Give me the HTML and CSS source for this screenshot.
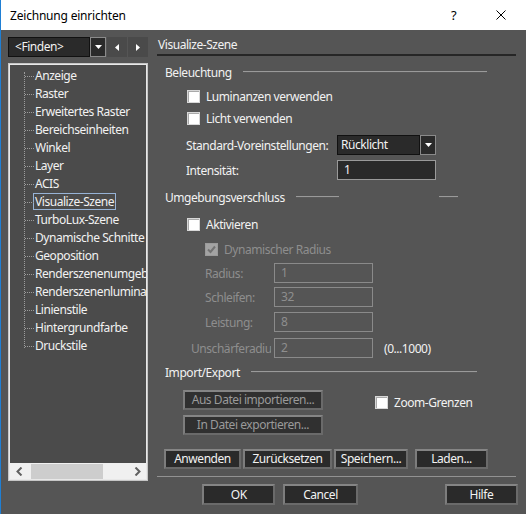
FILE: index.html
```html
<!DOCTYPE html>
<html lang="de">
<head>
    <meta charset="UTF-8">
    <title>Zeichnung einrichten</title>
    <link rel="stylesheet" href="styles.css">
</head>
<body>
<div class="win">
    <div class="titlebar">
        <span class="title">Zeichnung einrichten</span>
        <span class="help">?</span>
        <svg class="close" width="10" height="10" viewBox="0 0 10 10"><path d="M0.5 0.5L9.5 9.5M9.5 0.5L0.5 9.5" stroke="#000" stroke-width="1"/></svg>
    </div>
    <div class="main">
        <div class="left">
            <div class="navbar">
                <div class="find">&lt;Finden&gt;</div>
                <div class="dd"><svg width="7" height="4" viewBox="0 0 7 4"><path d="M0 0H7L3.5 4Z" fill="#fff"/></svg></div>
                <div class="navbtn"><svg width="4" height="7" viewBox="0 0 4 7"><path d="M4 0V7L0 3.5Z" fill="#fff"/></svg></div>
                <div class="navbtn"><svg width="4" height="7" viewBox="0 0 4 7"><path d="M0 0V7L4 3.5Z" fill="#fff"/></svg></div>
            </div>
            <div class="tree">
                <ul class="items">
                    <li><span>Anzeige</span></li>
                    <li><span>Raster</span></li>
                    <li><span>Erweitertes Raster</span></li>
                    <li><span>Bereichseinheiten</span></li>
                    <li><span>Winkel</span></li>
                    <li><span>Layer</span></li>
                    <li><span>ACIS</span></li>
                    <li class="sel"><span>Visualize-Szene</span></li>
                    <li><span>TurboLux-Szene</span></li>
                    <li><span>Dynamische Schnitte</span></li>
                    <li><span>Geoposition</span></li>
                    <li><span>Renderszenenumgebung</span></li>
                    <li><span>Renderszenenluminanz</span></li>
                    <li><span>Linienstile</span></li>
                    <li><span>Hintergrundfarbe</span></li>
                    <li><span>Druckstile</span></li>
                </ul>
                <div class="hscroll">
                    <svg width="7" height="9" viewBox="0 0 7 9"><path d="M5.5 0.5L1.5 4.5L5.5 8.5" stroke="#606060" stroke-width="2" fill="none"/></svg>
                    <div class="track"><div class="thumb"></div></div>
                    <svg width="7" height="9" viewBox="0 0 7 9"><path d="M1.5 0.5L5.5 4.5L1.5 8.5" stroke="#606060" stroke-width="2" fill="none"/></svg>
                </div>
            </div>
        </div>

        <div class="right">
            <div class="pagehead">Visualize-Szene</div>

            <div class="grouphead g1">
                <span>Beleuchtung</span><i class="gline" style="width: 244px"></i>
            </div>
            <div class="row check r-lum"><i class="box"></i>Luminanzen verwenden</div>
            <div class="row check r-licht"><i class="box"></i>Licht verwenden</div>
            <div class="row field r-std">
                <span class="lbl lbl-a">Standard-Voreinstellungen:</span>
                <div class="combo"><span>Rücklicht</span></div>
                <div class="dd"><svg width="7" height="4" viewBox="0 0 7 4"><path d="M0 0H7L3.5 4Z" fill="#fff"/></svg></div>
            </div>
            <div class="row field r-int">
                <span class="lbl lbl-a">Intensität:</span>
                <div class="input wide">1</div>
            </div>

            <div class="grouphead g2">
                <span>Umgebungsverschluss</span><i class="gline" style="width: 43px"></i><i class="gline" style="width: 19px; margin-left: 100px"></i>
            </div>
            <div class="row check r-akt"><i class="box"></i>Aktivieren</div>
            <div class="row check off r-dyn"><i class="box checked"><svg width="11" height="11" viewBox="0 0 11 11"><path d="M2 5.5L4.5 8L9 2.5" stroke="#727272" stroke-width="2" fill="none"/></svg></i>Dynamischer Radius</div>
            <div class="row field off r-rad">
                <span class="lbl lbl-b">Radius:</span><div class="input">1</div>
            </div>
            <div class="row field off r-sch">
                <span class="lbl lbl-b">Schleifen:</span><div class="input">32</div>
            </div>
            <div class="row field off r-lei">
                <span class="lbl lbl-b">Leistung:</span><div class="input">8</div>
            </div>
            <div class="row field off r-uns">
                <span class="lbl lbl-c">Unschärferadius:</span><div class="input">2</div>
                <span class="range">(0...1000)</span>
            </div>

            <div class="grouphead g3">
                <span>Import/Export</span><i class="gline" style="width: 226px"></i>
            </div>
            <div class="io">
                <div class="iobtns">
                    <div class="btn dis io1">Aus Datei importieren...</div>
                    <div class="btn dis io2">In Datei exportieren...</div>
                </div>
                <div class="row check zoom"><i class="box"></i>Zoom-Grenzen</div>
            </div>

            <div class="actions">
                <div class="btn" style="width: 77px">Anwenden</div>
                <div class="btn" style="width: 89px">Zurücksetzen</div>
                <div class="btn" style="width: 74px">Speichern...</div>
                <div class="btn gap7" style="width: 73px">Laden...</div>
            </div>
            <div class="sep"></div>
            <div class="dialogbtns">
                <div class="btn big" style="width: 74px">OK</div>
                <div class="btn big" style="width: 75px">Cancel</div>
                <div class="btn big push" style="width: 74px">Hilfe</div>
            </div>
        </div>
    </div>
</div>
</body>
</html>
```

FILE: styles.css
```css
* {
    margin: 0; padding: 0; box-sizing: border-box;
}
body {
    width: 526px; height: 514px; overflow: hidden;
    font-family: "Noto Sans", "Open Sans", sans-serif; font-size: 12px; letter-spacing: -0.45px; color: #f2f2f2;
}
.win {
    width: 526px; height: 514px; background: #555555; border-left: 1px solid #1f7fd4;
}

/* title bar */
.titlebar {
    height: 30px; background: #fff; display: flex; align-items: center; color: #000;
}
.title { margin-left: 9px; flex: 1; letter-spacing: -0.2px; }
.help { width: 8px; margin-right: 37px; font-size: 13px; }
.close { margin-right: 20px; }

.main { display: flex; padding-top: 7px; }

/* left side */
.left { width: 140px; margin-left: 7px; }
.navbar { display: flex; height: 20px; }
.find {
    width: 82px; height: 20px; background: #2a2a2a; border: 1px solid #111; line-height: 17px; padding-left: 6px;
}
.dd {
    width: 16px; height: 20px; background: #2a2a2a; border: 1px solid #8a8a8a;
    display: flex; align-items: center; justify-content: center;
}
.navbtn {
    width: 20px; height: 20px; margin-left: 1px; background: #4a4a4a;
    display: flex; align-items: center; justify-content: center;
}
.tree {
    margin-top: 6px; height: 418px; background: #4b4b4b;
    border: 1px solid #c6c6c6; box-shadow: inset 0 0 0 1px #e8e8e8;
    display: flex; flex-direction: column; padding: 1px;
}
.items {
    list-style: none; flex: 1; position: relative; padding-top: 2px; overflow: hidden;
}
.items:before {
    content: ""; position: absolute; left: 14px; top: 7px; height: 276px; border-left: 1px dotted #9c9c9c;
}
.items li {
    height: 18px; line-height: 18px; white-space: nowrap; padding-left: 23px; position: relative;
}
.items li:before {
    content: ""; position: absolute; left: 15px; top: 9px; width: 9px; border-top: 1px dotted #9c9c9c;
}
.items li span { padding: 0 1px; border: 1px solid transparent; line-height: 15px; display: inline-block; }
.items li.sel span { border-color: #97b3d6; }

.hscroll {
    height: 16px; background: #f0f0f0; display: flex; align-items: center; padding: 0 5px 0 6px;
}
.track { flex: 1; height: 15px; padding: 0 31px 0 8px; }
.thumb { height: 15px; background: #cdcdcd; }

/* right side */
.right { width: 361px; margin-left: 9px; }
.pagehead {
    width: 359px; height: 19px; line-height: 16px; padding-left: 1px; border-bottom: 2px solid #262626;
}
.grouphead { display: flex; align-items: center; height: 16px; padding-left: 8px; }
.grouphead span { margin-right: 11px; }
.gline { display: block; height: 2px; border-top: 1px solid #9a9a9a; border-bottom: 1px solid #5a5a5a; }
.g1 { margin-top: 8px; }
.g2 { margin-top: 9px; }
.g3 { margin-top: 6px; }

.row { display: flex; align-items: center; }
.check { height: 16px; padding-left: 30px; }
.box {
    display: flex; align-items: center; justify-content: center;
    width: 13px; height: 13px; background: #fff; border: 1px solid #d8d8d8;
    box-shadow: inset 1px 1px 0 #a9a9a9; margin-right: 6px;
}
.box.checked { background: #a3a3a3; border-color: #9a9a9a; box-shadow: none; }
.off { color: #8e8e8e; }

.r-lum { margin-top: 8px; }
.r-licht { margin-top: 6px; }
.field { height: 20px; }
.r-std { margin-top: 9px; }
.r-int { margin-top: 5px; }
.lbl { display: block; white-space: nowrap; overflow: hidden; }
.lbl-a { width: 151px; margin-left: 29px; }
.lbl-b { width: 69px; margin-left: 48px; }
.lbl-c { width: 80px; margin-left: 34px; margin-right: 3px; }
.combo {
    width: 83px; height: 20px; background: #2a2a2a; border: 1px solid #111; line-height: 17px; padding-left: 3px;
}
.input {
    width: 99px; height: 20px; border: 1px solid #8a8a8a; line-height: 17px; padding-left: 6px;
}
.wide { background: #2a2a2a; border-color: #9a9a9a; width: 99px; }
.range { margin-left: 11px; color: #f2f2f2; }

.r-akt { margin-top: 11px; }
.r-dyn { margin-top: 9px; padding-left: 48px; }
.r-rad { margin-top: 6px; }
.r-sch { margin-top: 4px; }
.r-lei { margin-top: 5px; }
.r-uns { margin-top: 6px; }

/* buttons */
.btn {
    height: 20px; background: #2a2a2a; color: #f2f2f2; text-align: center; line-height: 16px; white-space: nowrap;
    border: 2px solid #6a6a6a; border-top-color: #858585; border-left-color: #7d7d7d;
}
.btn.dis { color: #9a9a9a; background: #303030; }
.io { display: flex; margin-top: 10px; padding-left: 26px; }
.iobtns { width: 140px; }
.io2 { margin-top: 5px; }
.zoom { margin-top: 4px; padding-left: 52px; align-self: flex-start; }

.actions { display: flex; gap: 2px; margin-top: 14px; padding-left: 7px; }
.actions .gap7 { margin-left: 5px; }
.sep { margin-top: 7px; width: 359px; height: 1px; background: #929292; }
.dialogbtns { display: flex; gap: 8px; margin-top: 7px; padding-left: 45px; }
.btn.big { height: 21px; line-height: 17px; }
.push { margin-left: 79px; }
```
